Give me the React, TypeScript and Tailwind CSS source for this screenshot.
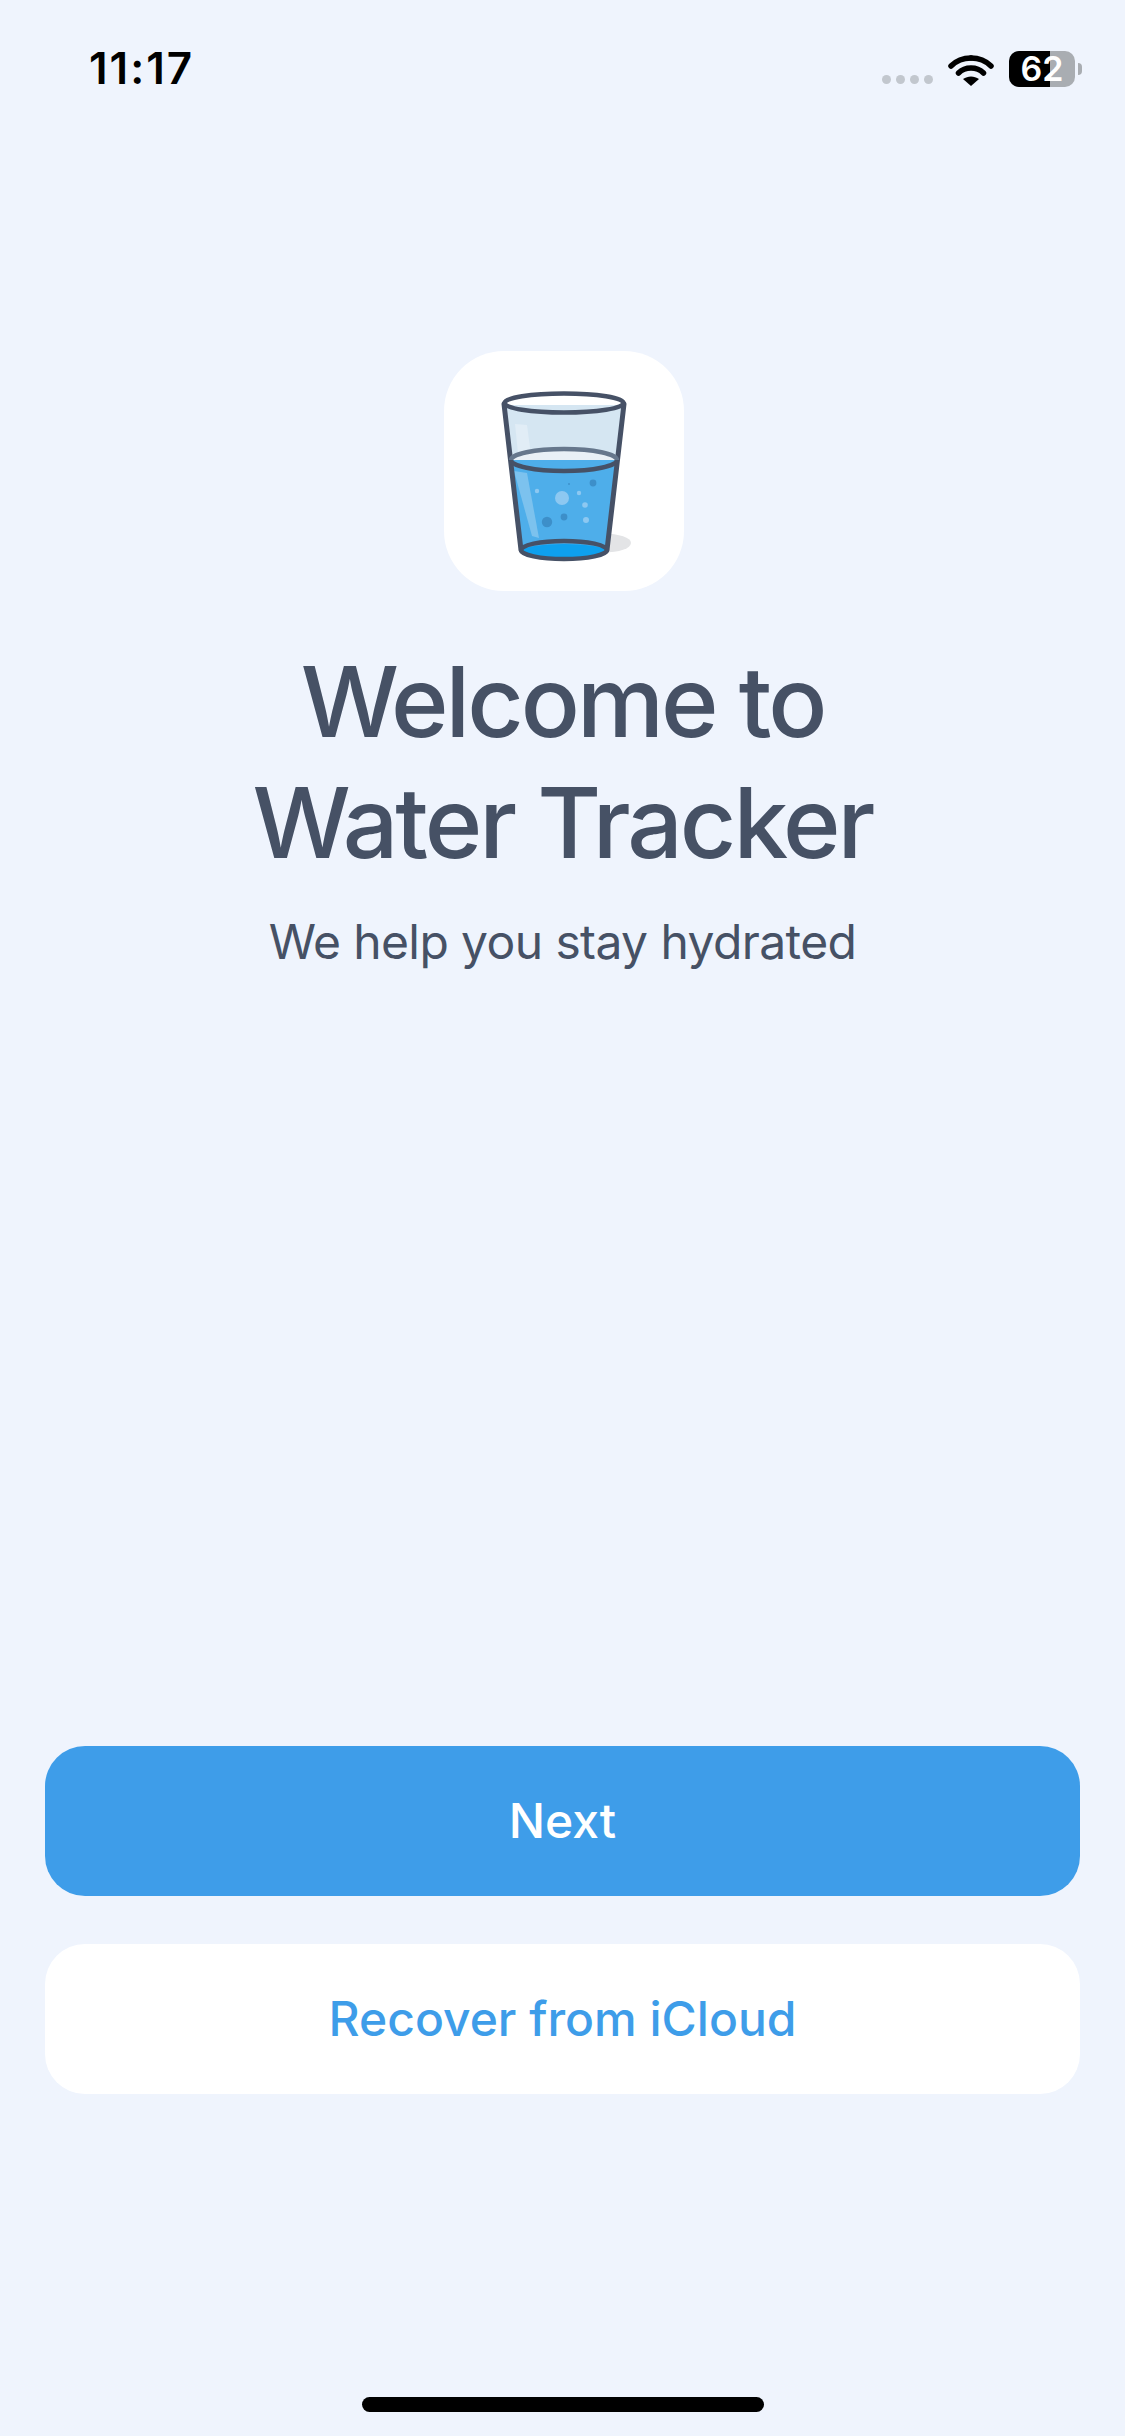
import React from "react"

function WaterGlass() {
  return (
    <svg width="240" height="240" viewBox="0 0 240 240" fill="none">
      {/* shadow */}
      <ellipse cx="160" cy="192" rx="27" ry="9.5" fill="#e3e4e6" />
      {/* empty part of the glass */}
      <path d="M61 52 L67 110 H173 L179 52 Z" fill="#d5e6f2" />
      <path d="M71 73 L83 74 L87 104 L74 102 Z" fill="#e1edf6" />
      <ellipse cx="120" cy="52" rx="59" ry="10" fill="#ffffff" />
      <path d="M64 54 H176 Q150 62 120 62 Q90 62 64 54 Z" fill="#d5e6f2" />
      {/* water */}
      <path d="M67 109 L78 199 H162 L173 109 Z" fill="#4eaeea" />
      <path d="M67 109 A53 11 0 0 1 173 109 Z" fill="#e9f0f6" />
      <path d="M70 120 L83 122 L95 187 L88 185 Z" fill="#7cc2ee" />
      <circle cx="118" cy="147" r="7" fill="#8dc8f1" />
      <circle cx="93" cy="140" r="2.2" fill="#8dc8f1" />
      <circle cx="135" cy="142" r="2.2" fill="#8dc8f1" />
      <circle cx="141" cy="154" r="2.8" fill="#8dc8f1" />
      <circle cx="142" cy="169" r="3" fill="#8dc8f1" />
      <circle cx="149" cy="132" r="3.4" fill="#3d8fc9" />
      <circle cx="125" cy="133" r="0.9" fill="#3d8fc9" />
      <circle cx="120" cy="166" r="3.4" fill="#3d8fc9" />
      <circle cx="103" cy="171" r="5.2" fill="#3d8fc9" />
      <ellipse cx="120" cy="200" rx="42" ry="7" fill="#0ea0ee" />
      {/* outlines */}
      <path d="M60 53 L77 199 M180 53 L163 199" stroke="#465166" strokeWidth="5" strokeLinecap="round" />
      <path d="M67 109 A53 11 0 0 1 173 109" stroke="#66778c" strokeWidth="4.5" />
      <path d="M67 109 A53 11 0 0 0 173 109" stroke="#465166" strokeWidth="4.5" />
      <ellipse cx="120" cy="52" rx="59.5" ry="9.5" stroke="#465166" strokeWidth="4.5" />
      <ellipse cx="120" cy="199" rx="43" ry="9" stroke="#465166" strokeWidth="4.5" />
    </svg>
  )
}

function WifiIcon() {
  return (
    <svg width="46" height="34" viewBox="0 0 46 34" fill="none">
      <path d="M23 6 C31 6 38 9 43 14" stroke="#000" strokeWidth="5.5" strokeLinecap="round" />
      <path d="M23 6 C15 6 8 9 3 14" stroke="#000" strokeWidth="5.5" strokeLinecap="round" />
      <path d="M10.5 21 C14 17.5 18 16 23 16 C28 16 32 17.5 35.5 21" stroke="#000" strokeWidth="5.5" strokeLinecap="round" />
      <path d="M15 27 L23 34 L31 27 C26 23.5 20 23.5 15 27 Z" fill="#000" />
    </svg>
  )
}

export default function App() {
  return (
    <div className="w-[1125px] h-[2436px] bg-[#eff4fd] flex flex-col font-['Inter',sans-serif] overflow-hidden">
      {/* Status bar */}
      <div className="h-[90px] pl-[89px] pr-[43px] pt-[41px] flex items-start justify-between">
        <span className="text-[44px] leading-[54px] font-semibold text-black tracking-[2px]">11:17</span>
        <div className="flex items-start">
          <div className="flex gap-[5px] mt-[34px] mr-[15px]">
            <div className="w-[9px] h-[9px] rounded-full bg-[#c2c7ce]" />
            <div className="w-[9px] h-[9px] rounded-full bg-[#c2c7ce]" />
            <div className="w-[9px] h-[9px] rounded-full bg-[#c2c7ce]" />
            <div className="w-[9px] h-[9px] rounded-full bg-[#c2c7ce]" />
          </div>
          <div className="mt-[11px] mr-[15px]">
            <WifiIcon />
          </div>
          <div className="flex items-center mt-[10px]">
            <div className="relative w-[66px] h-[36px] rounded-[10px] bg-[#a9adb2] flex items-center justify-center">
              <div className="absolute left-0 top-0 bottom-0 w-[41px] bg-black rounded-l-[10px]" />
              <span className="relative text-[34px] leading-[36px] font-semibold text-white">62</span>
            </div>
            <div className="w-[4px] h-[12px] ml-[3px] rounded-r-full bg-[#a9adb2]" />
          </div>
        </div>
      </div>

      {/* Hero */}
      <div className="flex flex-col items-center mt-[261px]">
        <div className="w-[240px] h-[240px] ml-[2px] rounded-[60px] bg-white">
          <WaterGlass />
        </div>
        <h1 className="mt-[50px] text-[98px] leading-[121px] font-medium text-[#465165] text-center tracking-[-3px]">
          Welcome to
          <br />
          Water Tracker
        </h1>
        <p className="mt-[30px] text-[48px] leading-[58px] text-[#465165] tracking-[-0.6px]">We help you stay hydrated</p>
      </div>

      {/* Actions */}
      <div className="mt-auto px-[45px] flex flex-col gap-[48px]">
        <button className="h-[150px] rounded-[40px] bg-[#3e9de9] text-white text-[48px] font-medium">Next</button>
        <button className="h-[150px] rounded-[40px] bg-white text-[#3e9de9] text-[48px] font-medium">
          Recover from iCloud
        </button>
      </div>

      {/* Home indicator */}
      <div className="mt-[303px] mb-[24px] mx-auto w-[402px] h-[15px] rounded-full bg-black" />
    </div>
  )
}
